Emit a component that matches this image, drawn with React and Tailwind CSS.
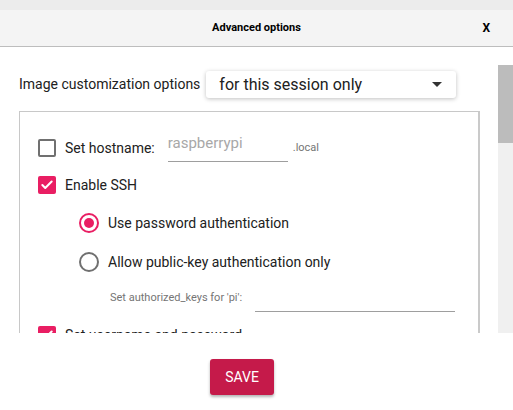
import { Check } from 'lucide-react';

function Checkbox({ checked }) {
  if (checked) {
    return (
      <div className="w-[18px] h-[18px] rounded-[2px] bg-[#e91e63] flex items-center justify-center shrink-0">
        <Check size={14} strokeWidth={3.5} className="text-white" />
      </div>
    );
  }
  return <div className="w-[18px] h-[18px] rounded-[2px] border-2 border-[#707070] shrink-0" />;
}

function Radio({ checked }) {
  if (checked) {
    return (
      <div className="w-[20px] h-[20px] rounded-full border-2 border-[#e91e63] flex items-center justify-center shrink-0">
        <div className="w-[10px] h-[10px] rounded-full bg-[#e91e63]" />
      </div>
    );
  }
  return <div className="w-[20px] h-[20px] rounded-full border-2 border-[#707070] shrink-0" />;
}

export default function App() {
  return (
    <div className="w-[513px] h-[410px] bg-white flex flex-col overflow-hidden text-[#212121]" style={{ fontFamily: 'Roboto, "Liberation Sans", sans-serif' }}>
      <div className="h-[10px] bg-[#ececec]" />
      <div className="h-[37px] bg-[#f4f4f4] border-b border-[#bdbdbd] flex items-center relative">
        <div className="flex-1 text-center text-[11px] font-bold text-black">Advanced options</div>
        <div className="absolute right-[23px] text-[12px] font-bold text-black">X</div>
      </div>

      <div className="h-[286px] flex overflow-hidden">
        <div className="flex-1 pt-[24px]">
          <div className="flex items-center pl-[19px]">
            <span className="text-[14px]">Image customization options</span>
            <div className="ml-[6px] w-[250px] h-[27px] rounded-[3px] shadow-[0_1px_4px_rgba(0,0,0,0.25)] flex items-center pl-[13px] pr-[14px]">
              <span className="flex-1 text-[16px]">for this session only</span>
              <div className="w-0 h-0 border-l-[5px] border-r-[5px] border-t-[5px] border-l-transparent border-r-transparent border-t-[#333]" />
            </div>
          </div>

          <div className="ml-[19px] mt-[13px] w-[461px] h-[260px] border-l border-t border-[#c8c8c8] border-r-2 border-r-[#cacaca] pt-[27px] pl-[18px]">
            <div className="flex items-center h-[18px]">
              <Checkbox />
              <span className="ml-[9px] text-[14px]">Set hostname:</span>
              <div className="ml-[13px] w-[120px] h-[28px] border-b border-[#9e9e9e] flex items-center">
                <span className="text-[15px] text-[#a8a8a8] -mt-[8px]">raspberrypi</span>
              </div>
              <span className="ml-[5px] text-[11px] text-[#757575]">.local</span>
            </div>

            <div className="flex items-center h-[18px] mt-[19px]">
              <Checkbox checked />
              <span className="ml-[9px] text-[14px]">Enable SSH</span>
            </div>

            <div className="flex items-center h-[20px] mt-[19px] pl-[41px]">
              <Radio checked />
              <span className="ml-[9px] text-[14px]">Use password authentication</span>
            </div>

            <div className="flex items-center h-[20px] mt-[19px] pl-[41px]">
              <Radio />
              <span className="ml-[9px] text-[14px]">Allow public-key authentication only</span>
            </div>

            <div className="flex items-center mt-[16px] pl-[72px] h-[24px]">
              <span className="text-[11px] text-[#757575] -mt-[3px]">Set authorized_keys for 'pi':</span>
              <div className="ml-[13px] w-[200px] h-[24px] border-b border-[#9e9e9e]" />
            </div>

            <div className="flex items-center h-[18px] mt-[14px]">
              <Checkbox checked />
              <span className="ml-[9px] text-[14px]">Set username and password</span>
            </div>
          </div>
        </div>

        <div className="w-[15px] mt-[18px] bg-[#f0f0f0] flex flex-col">
          <div className="h-[78px] bg-[#bcbcbc]" />
        </div>
      </div>

      <div className="pt-[26px] pl-[210px]">
        <button className="w-[64px] h-[36px] rounded-[3px] bg-[#c51a4a] text-white text-[14px] shadow-[0_2px_3px_rgba(0,0,0,0.3)]">SAVE</button>
      </div>
    </div>
  );
}
